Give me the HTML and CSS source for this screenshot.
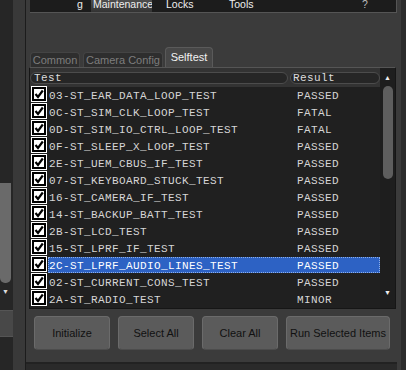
FILE: index.html
```html
<!DOCTYPE html>
<html lang="en">
<head>
  <meta charset="UTF-8">
  <title>Selftest</title>
  <link rel="stylesheet" href="styles.css">
</head>
<body>
  <div class="window">
    <div class="side">
      <div class="side-track">
        <div class="side-thumb"></div>
        <div class="side-arrow">&#9660;</div>
      </div>
      <div class="side-box"></div>
    </div>
    <div class="side-gap"></div>

    <div class="main">
      <div class="menubar">
        <span class="menu-item m-cut">g</span>
        <span class="menu-item m-active">Maintenance</span>
        <span class="menu-item m-locks">Locks</span>
        <span class="menu-item m-tools">Tools</span>
        <span class="menu-item m-help">?</span>
      </div>

      <div class="tabs">
        <div class="tab tab-common">Common</div>
        <div class="tab tab-camera">Camera Config</div>
        <div class="tab tab-active">Selftest</div>
      </div>

      <div class="list">
        <div class="list-body">
          <div class="list-head">
            <span class="th th-test">Test</span>
            <span class="th th-result">Result</span>
          </div>
          <div id="rows"></div>
        </div>
        <div class="vscroll">
          <div class="vs-arrow">&#9650;</div>
          <div class="vs-thumb"></div>
          <div class="vs-space"></div>
          <div class="vs-arrow">&#9660;</div>
        </div>
      </div>

      <div class="buttons">
        <button class="btn">Initialize</button>
        <button class="btn">Select All</button>
        <button class="btn">Clear All</button>
        <button class="btn btn-wide">Run Selected Items</button>
      </div>
    </div>

    <div class="edge"></div>
  </div>

  <script>
    // selftest list: name, result, selected
    const tests = [
      ['03-ST_EAR_DATA_LOOP_TEST', 'PASSED'],
      ['0C-ST_SIM_CLK_LOOP_TEST', 'FATAL'],
      ['0D-ST_SIM_IO_CTRL_LOOP_TEST', 'FATAL'],
      ['0F-ST_SLEEP_X_LOOP_TEST', 'PASSED'],
      ['2E-ST_UEM_CBUS_IF_TEST', 'PASSED'],
      ['07-ST_KEYBOARD_STUCK_TEST', 'PASSED'],
      ['16-ST_CAMERA_IF_TEST', 'PASSED'],
      ['14-ST_BACKUP_BATT_TEST', 'PASSED'],
      ['2B-ST_LCD_TEST', 'PASSED'],
      ['15-ST_LPRF_IF_TEST', 'PASSED'],
      ['2C-ST_LPRF_AUDIO_LINES_TEST', 'PASSED', true],
      ['02-ST_CURRENT_CONS_TEST', 'PASSED'],
      ['2A-ST_RADIO_TEST', 'MINOR']
    ];

    const check = '<svg width="10" height="10" viewBox="0 0 10 10"><path d="M1.5 5 L4 8 L8.8 1.5" fill="none" stroke="#000" stroke-width="2.2"/></svg>';

    const rows = document.getElementById('rows');
    tests.forEach(t => {
      const row = document.createElement('div');
      row.className = 'row' + (t[2] ? ' selected' : '');
      row.innerHTML = `<span class="cb-cell"><span class="cb">${check}</span></span>` +
        `<span class="cell"><span class="name">${t[0]}</span><span class="result">${t[1]}</span></span>`;
      rows.appendChild(row);
    });
  </script>
</body>
</html>
```

FILE: styles.css
```css
body {
  margin: 0;
  background: #2a2a2a;
  font-family: "Liberation Sans", Arial, sans-serif;
  overflow: hidden;
}
.window {
  display: flex;
  width: 406px;
  height: 370px;
}

/* left neighbour panel */
.side {
  width: 13px;
  background: #262626;
}
.side-track {
  height: 300px;
  padding-top: 183px;
  box-sizing: border-box;
}
.side-thumb {
  width: 11px;
  height: 100px;
  background: #6a6a6a;
  border-radius: 0 0 5px 5px;
}
.side-arrow {
  font-size: 7px;
  color: #ddd;
  text-align: center;
  margin-top: 5px;
  width: 11px;
}
.side-box {
  margin-top: 10px;
  width: 14px;
  height: 25px;
  background: #484848;
  border-top: 1px solid #555;
  border-bottom: 1px solid #555;
}
.side-gap {
  width: 12px;
  background: #393939;
  border-right: 1px solid #1c1c1c;
}

/* main panel */
.main {
  width: 371px;
  height: 362px;
  background: #3b3b3b;
  border-bottom: 2px solid #222;
}
.menubar {
  margin-left: 4px;
  height: 12px;
  background: #1c1c1c;
  border-right: 1px solid #555;
  border-bottom: 1px solid #555;
  display: flex;
  font-size: 10.5px;
  line-height: 8.5px;
  color: #eee;
  overflow: hidden;
}
.menu-item {
  white-space: nowrap;
}
.m-cut {
  margin-left: 47px;
  width: 14px;
}
.m-active {
  width: 59px;
  height: 12px;
  padding-left: 2px;
  overflow: hidden;
  background: linear-gradient(#4d4d4d, #333);
}
.m-locks {
  margin-left: 14px;
  width: 63px;
}
.m-tools {
  width: 133px;
}
.m-help {
  color: #bbb;
}

.tabs {
  display: flex;
  align-items: flex-end;
  margin: 34px 0 0 4px;
  height: 20px;
}
.tab {
  height: 15px;
  box-sizing: border-box;
  font-size: 11px;
  line-height: 15px;
  color: #7d7d7d;
  background: #2e2e2e;
  border: 1px solid #444;
  border-bottom: none;
  border-radius: 4px 4px 0 0;
  text-align: center;
}
.tab-common {
  width: 50px;
}
.tab-camera {
  width: 80px;
  margin-left: 3px;
}
.tab-active {
  width: 48px;
  height: 20px;
  margin-left: 2px;
  color: #f2f2f2;
  background: #474747;
  border-color: #5a5a5a;
  line-height: 18px;
}

.list {
  display: flex;
  margin-left: 3px;
  width: 367px;
  height: 242px;
  box-sizing: border-box;
  background: #202020;
  border: 1px solid #161616;
  border-top-color: #555;
}
.list-body {
  width: 351px;
}
.list-head {
  display: flex;
  gap: 2px;
  padding: 4px 0 3px;
  background: #333;
}
.th {
  height: 12px;
  box-sizing: border-box;
  border: 1px solid #4c4c4c;
  border-radius: 6px;
  background: #262626;
  font-family: "Liberation Mono", monospace;
  font-size: 11px;
  line-height: 11px;
  letter-spacing: 0.4px;
  color: #dcdcdc;
}
.th-test {
  width: 258px;
  padding-left: 3px;
}
.th-result {
  width: 90px;
  padding-left: 2px;
}

.row {
  display: flex;
  height: 17px;
  font-family: "Liberation Mono", monospace;
  font-size: 11px;
  letter-spacing: 0.4px;
  color: #d6d6d6;
}
.cb-cell {
  width: 18px;
  padding-left: 2px;
  box-sizing: border-box;
}
.cb {
  display: flex;
  align-items: center;
  justify-content: center;
  width: 14px;
  height: 14px;
  box-sizing: border-box;
  background: #fff;
  border: 2px solid #000;
  outline: 1px solid #fff;
}
.cell {
  display: flex;
  width: 332px;
  height: 16px;
  line-height: 18px;
  box-sizing: border-box;
}
.name {
  width: 242px;
  padding-left: 1px;
}
.result {
  padding-left: 6px;
}
.selected .cell {
  background: #2d62c4;
  border: 1px dotted #8fb0e8;
  line-height: 16px;
  color: #fff;
}
.selected .name {
  padding-left: 0;
}

.vscroll {
  width: 15px;
  display: flex;
  flex-direction: column;
  align-items: center;
  background: #1e1e1e;
}
.vs-arrow {
  font-size: 7px;
  color: #eee;
  height: 10px;
  line-height: 10px;
}
.vs-arrow:first-child {
  margin-top: 5px;
}
.vs-thumb {
  width: 10px;
  height: 93px;
  margin-top: 3px;
  border-radius: 5px;
  background: #5e5e5e;
}
.vs-space {
  flex: 1;
}
.vs-arrow:last-child {
  margin-bottom: 10px;
}

.buttons {
  display: flex;
  gap: 8px;
  margin: 7px 0 0 8px;
}
.btn {
  width: 76px;
  height: 34px;
  background: #5b5b5b;
  border: 1px solid #6b6b6b;
  border-bottom-color: #4c4c4c;
  border-radius: 4px;
  font-family: "Liberation Sans", Arial, sans-serif;
  font-size: 11px;
  color: #111;
  padding: 0;
}
.btn-wide {
  width: 104px;
}

.edge {
  width: 9px;
  background: linear-gradient(90deg, #3b3b3b 0 4px, #2c2c2c 4px);
}
```
